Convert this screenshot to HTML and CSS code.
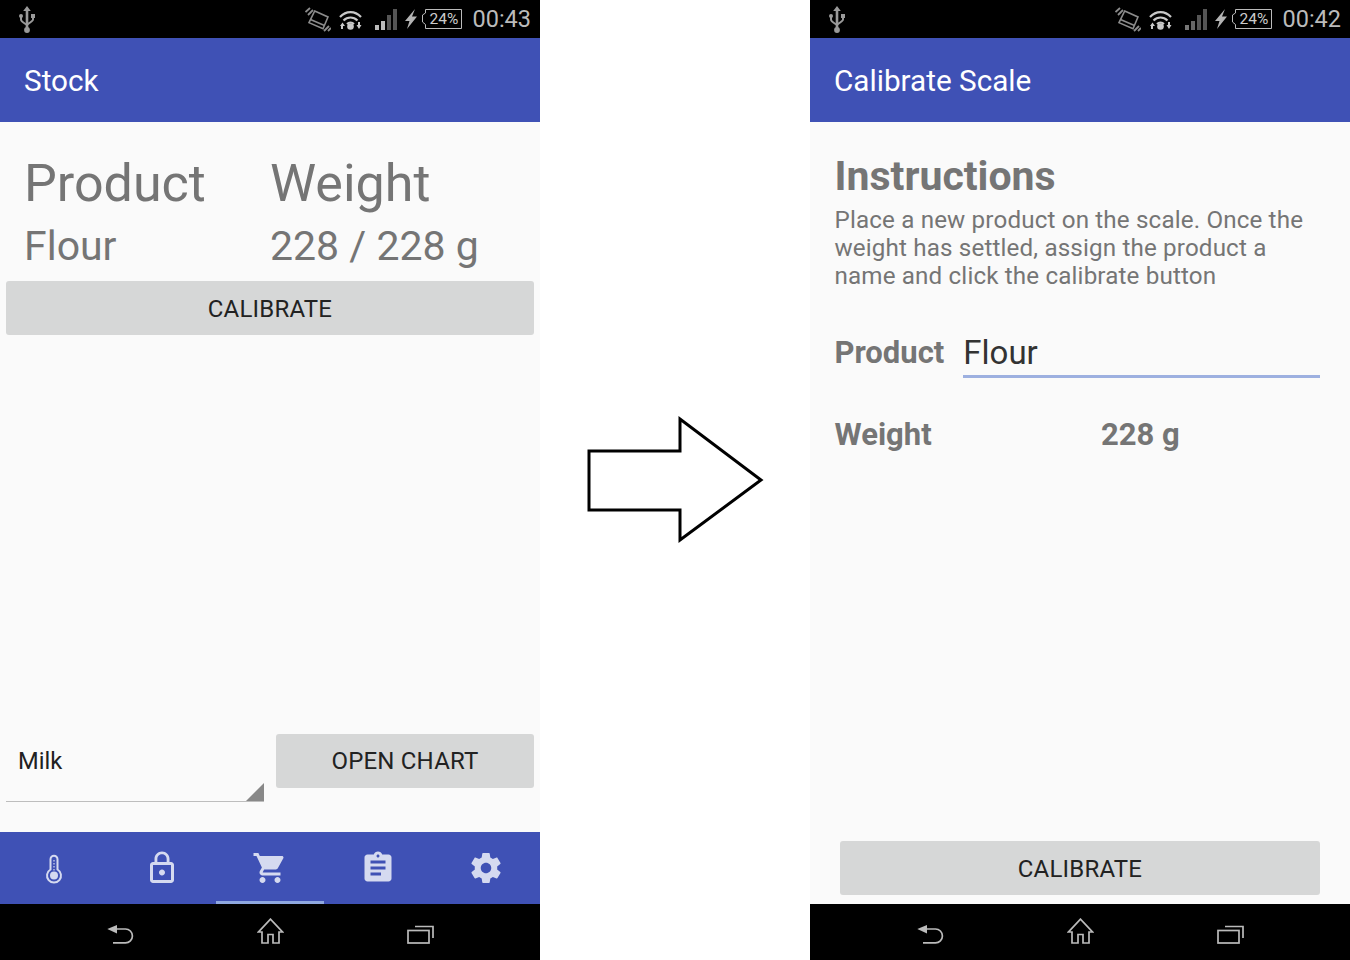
FILE: index.html
```html
<!DOCTYPE html>
<html lang="en">
<head>
  <meta charset="UTF-8">
  <title>Scale screens</title>
  <link rel="stylesheet" href="styles.css">
</head>
<body>
  <svg class="defs" width="0" height="0">
    <defs>
      <g id="usb" fill="#999">
        <path d="M8 0l3.800 5H9.300v19H6.700V5H4.200z"/>
        <circle cx="8" cy="24" r="2.900"/>
        <circle cx="2" cy="10" r="2"/>
        <rect x="12" y="8" width="4" height="4"/>
        <path d="M2 11v2.500c0 2 3 3.500 6 5.500M14 11v2.500c0 1.500-3 3-6 5" fill="none" stroke="#999" stroke-width="2"/>
      </g>
      <g id="vibrate" fill="none" stroke="#8c8c8c" stroke-width="1.600">
        <path d="M9.700 5L23 11 18 22.700 4 16.700z"/>
        <path d="M5.500 13.500l14 6"/>
        <path d="M.5 6L5 2M3 9l5-5M19 25l5-5M23 25l3-3" stroke-width="1.800"/>
      </g>
      <g id="wifi" fill="none" stroke="#c8c8c8" stroke-width="2.200">
        <path d="M1 8c6-6.500 15-6.500 21 0M4.500 11.500c4-4 10-4 14 0M8 15c2-1.800 5-1.800 7 0"/>
        <circle cx="11.500" cy="17.500" r="3.300" fill="#c8c8c8" stroke="none"/>
        <path d="M1 20h2v-3H5L2.500 13.500 0 17h1zM20 13h-2v3h-1.500l2.500 4 2.500-4H20z" transform="translate(1 0)" fill="#c8c8c8" stroke="none"/>
      </g>
      <g id="bolt"><path d="M10 0L0 12h4.500L2 20l10-12.500H7z" fill="#b4b4b4"/></g>
      <g id="battery-box" fill="none" stroke="#bbb" stroke-width="1">
        <path d="M3.500 4V.5H39.500V19.500H3.500V15.500M3.500 4L.5 6V13L3.500 15.500"/>
      </g>
      <g id="tab-thermo" fill="none" stroke="#d5daf0" stroke-width="2">
        <path d="M14.500 9.300a3.500 3.500 0 0 1 7 0v10.200a7 7 0 1 1-7 0z"/>
        <circle cx="18" cy="25.500" r="4" fill="#d5daf0" stroke="none"/>
        <path d="M18 10v11" stroke-width="1.200" stroke-dasharray="1.500 1.500"/>
      </g>
      <g id="tab-lock"><path d="M12 17c1.100 0 2-.9 2-2s-.9-2-2-2-2 .9-2 2 .9 2 2 2zm6-9h-1V6c0-2.760-2.240-5-5-5S7 3.240 7 6v2H6c-1.100 0-2 .9-2 2v10c0 1.100.9 2 2 2h12c1.100 0 2-.9 2-2V10c0-1.100-.9-2-2-2zM8.900 6c0-1.710 1.390-3.100 3.100-3.100s3.100 1.390 3.100 3.100v2H8.900V6zM18 20H6V10h12v10z"/></g>
      <g id="tab-cart"><path d="M7 18c-1.100 0-1.990.9-1.990 2S5.900 22 7 22s2-.9 2-2-.9-2-2-2zM1 2v2h2l3.600 7.590-1.350 2.450c-.16.280-.25.610-.25.960 0 1.100.9 2 2 2h12v-2H7.420c-.14 0-.25-.11-.25-.25l.03-.12.9-1.630h7.450c.750 0 1.410-.41 1.750-1.030l3.580-6.490c.08-.14.120-.31.120-.48 0-.55-.45-1-1-1H5.210l-.94-2H1zm16 16c-1.100 0-1.990.9-1.990 2s.89 2 1.990 2 2-.9 2-2-.9-2-2-2z"/></g>
      <g id="tab-list"><path d="M19 3h-4.180C14.400 1.840 13.300 1 12 1c-1.300 0-2.400.84-2.820 2H5c-1.100 0-2 .9-2 2v14c0 1.100.9 2 2 2h14c1.100 0 2-.9 2-2V5c0-1.100-.9-2-2-2zm-7 0c.55 0 1 .45 1 1s-.45 1-1 1-1-.45-1-1 .45-1 1-1zm2 14H7v-2h7v2zm3-4H7v-2h10v2zm0-4H7V7h10v2z"/></g>
      <g id="tab-gear"><path d="M19.430 12.980c.04-.32.07-.64.07-.98s-.03-.66-.07-.98l2.110-1.650c.19-.15.24-.42.120-.64l-2-3.460c-.12-.22-.39-.3-.61-.22l-2.490 1c-.52-.4-1.080-.73-1.690-.98l-.38-2.650C14.460 2.180 14.250 2 14 2h-4c-.25 0-.46.18-.49.42l-.38 2.650c-.61.25-1.170.59-1.690.98l-2.490-1c-.23-.09-.49 0-.61.22l-2 3.460c-.13.22-.07.49.12.64l2.110 1.650c-.04.32-.07.65-.07.98s.03.66.07.98l-2.110 1.650c-.19.15-.24.42-.12.64l2 3.460c.12.22.39.3.61.22l2.490-1c.52.4 1.080.73 1.690.98l.38 2.650c.03.24.24.42.49.42h4c.25 0 .46-.18.49-.42l.38-2.650c.61-.25 1.170-.59 1.690-.98l2.490 1c.23.09.49 0 .61-.22l2-3.460c.12-.22.07-.49-.12-.64l-2.110-1.650zM12 15.500c-1.930 0-3.500-1.570-3.500-3.500s1.570-3.500 3.500-3.500 3.500 1.570 3.500 3.500-1.570 3.500-3.500 3.500z"/></g>
      <g id="nav-back" fill="none" stroke="#bbb" stroke-width="1.700">
        <path d="M9 5h9.500a6.900 6.900 0 0 1 0 13.800H6"/>
        <path d="M.3 5L10 1v8.500z" fill="#bbb" stroke="none"/>
      </g>
      <g id="nav-home" fill="none" stroke="#bbb" stroke-width="1.700">
        <path d="M13.500 1.200L1.500 14H5V25H11V16.500H16V25H22V14H25.500z"/>
      </g>
      <g id="nav-recent" fill="none" stroke="#bbb" stroke-width="1.700">
        <rect x="2" y="6.500" width="21" height="12.500"/>
        <path d="M9 2.500H27V14"/>
      </g>
    </defs>
  </svg>

  <section class="phone">
    <div class="status">
      <svg class="st-usb" width="16" height="27" viewBox="0 0 16 27"><use href="#usb"/></svg>
      <div class="status-right">
        <svg width="26" height="27" viewBox="0 0 26 27"><use href="#vibrate"/></svg>
        <svg class="st-wifi" width="23" height="21" viewBox="0 0 23 21"><use href="#wifi"/></svg>
        <div class="bars">
          <i class="b1"></i><i class="b2"></i><i class="b3"></i><i class="b4"></i>
        </div>
        <svg class="st-bolt" width="12" height="20" viewBox="0 0 12 20"><use href="#bolt"/></svg>
        <span class="battery">
          <svg class="battery-box" width="40" height="20" viewBox="0 0 40 20"><use href="#battery-box"/></svg>
          24%
        </span>
        <span class="clock">00:43</span>
      </div>
    </div>
    <header class="appbar">Stock</header>
    <main class="content">
      <div class="stock-table">
        <div class="th">Product</div><div class="th">Weight</div>
        <div class="td">Flour</div><div class="td">228 / 228 g</div>
      </div>
      <button class="btn btn-wide">CALIBRATE</button>
      <div class="chart-row">
        <div class="spinner">Milk</div>
        <button class="btn btn-chart">OPEN CHART</button>
      </div>
    </main>
    <nav class="tabs">
      <div class="tab"><svg width="36" height="36" viewBox="0 0 36 36"><use href="#tab-thermo"/></svg></div>
      <div class="tab"><svg width="36" height="36" viewBox="0 0 24 24"><use href="#tab-lock"/></svg></div>
      <div class="tab tab-on"><svg width="36" height="36" viewBox="0 0 24 24"><use href="#tab-cart"/></svg></div>
      <div class="tab"><svg width="36" height="36" viewBox="0 0 24 24"><use href="#tab-list"/></svg></div>
      <div class="tab"><svg width="36" height="36" viewBox="0 0 24 24"><use href="#tab-gear"/></svg></div>
    </nav>
    <footer class="navbar">
      <svg width="27" height="20" viewBox="0 0 27 20"><use href="#nav-back"/></svg>
      <svg width="27" height="26" viewBox="0 0 27 26"><use href="#nav-home"/></svg>
      <svg width="28" height="20" viewBox="0 0 28 20"><use href="#nav-recent"/></svg>
    </footer>
  </section>

  <div class="gutter">
    <svg width="178" height="128" viewBox="0 0 178 128">
      <polygon class="arrow" points="3,35 94,35 94,3 175,64 94,124 94,94 3,94"/>
    </svg>
  </div>

  <section class="phone">
    <div class="status">
      <svg class="st-usb" width="16" height="27" viewBox="0 0 16 27"><use href="#usb"/></svg>
      <div class="status-right">
        <svg width="26" height="27" viewBox="0 0 26 27"><use href="#vibrate"/></svg>
        <svg class="st-wifi" width="23" height="21" viewBox="0 0 23 21"><use href="#wifi"/></svg>
        <div class="bars bars-weak">
          <i class="b1"></i><i class="b2"></i><i class="b3"></i><i class="b4"></i>
        </div>
        <svg class="st-bolt" width="12" height="20" viewBox="0 0 12 20"><use href="#bolt"/></svg>
        <span class="battery">
          <svg class="battery-box" width="40" height="20" viewBox="0 0 40 20"><use href="#battery-box"/></svg>
          24%
        </span>
        <span class="clock">00:42</span>
      </div>
    </div>
    <header class="appbar">Calibrate Scale</header>
    <main class="content content-cal">
      <h2 class="cal-title">Instructions</h2>
      <p class="cal-text">Place a new product on the scale. Once the weight has settled, assign the product a name and click the calibrate button</p>
      <div class="field-row">
        <span class="label">Product</span>
        <span class="input">Flour</span>
      </div>
      <div class="weight-row">
        <span class="label">Weight</span>
        <span class="label">228 g</span>
      </div>
      <button class="btn btn-cal">CALIBRATE</button>
    </main>
    <footer class="navbar">
      <svg width="27" height="20" viewBox="0 0 27 20"><use href="#nav-back"/></svg>
      <svg width="27" height="26" viewBox="0 0 27 26"><use href="#nav-home"/></svg>
      <svg width="28" height="20" viewBox="0 0 28 20"><use href="#nav-recent"/></svg>
    </footer>
  </section>
</body>
</html>
```

FILE: styles.css
```css
body {
  margin: 0;
  display: flex;
  height: 960px;
  overflow: hidden;
  background-color: white;
  font-family: Roboto, sans-serif;
}
.defs {
  position: absolute;
}
.phone {
  width: 540px;
  height: 960px;
  display: flex;
  flex-direction: column;
  background-color: #fafafa;
}
.gutter {
  width: 270px;
  display: flex;
  align-items: center;
  justify-content: center;
}
.arrow {
  fill: white;
  stroke: black;
  stroke-width: 3;
}

/* status bar */
.status {
  height: 38px;
  background-color: black;
  display: flex;
  align-items: center;
  padding: 0 9px 0 19px;
}
.status-right {
  margin-left: auto;
  display: flex;
  align-items: center;
}
.st-wifi {
  margin-left: 8px;
}
.bars {
  display: flex;
  align-items: flex-end;
  gap: 2px;
  height: 21px;
  margin-left: 13px;
}
.bars i {
  display: block;
  width: 4px;
  background-color: #555;
}
.bars .b1 { height: 5px; background-color: #bbb; }
.bars .b2 { height: 9px; background-color: #bbb; }
.bars .b3 { height: 15px; }
.bars .b4 { height: 21px; }
.bars-weak .b1 { background-color: #777; }
.bars-weak .b2 { background-color: #666; }
.st-bolt {
  margin-left: 8px;
}
.battery {
  position: relative;
  margin-left: 5px;
  width: 40px;
  height: 20px;
  padding-left: 3px;
  box-sizing: border-box;
  color: #ccc;
  font-size: 15.500px;
  line-height: 20px;
  text-align: center;
}
.battery-box {
  position: absolute;
  left: 0;
  top: 0;
}
.clock {
  margin-left: 10px;
  color: #bbb;
  font-size: 23.500px;
}

.appbar {
  height: 84px;
  background-color: #3f51b5;
  color: white;
  font-size: 29.700px;
  line-height: 86px;
  padding-left: 24px;
}
.content {
  flex: 1;
  display: flex;
  flex-direction: column;
  padding: 0 6px;
  color: #757575;
}

/* stock screen */
.stock-table {
  display: grid;
  grid-template-columns: 246px 1fr;
  padding: 29px 0 0 18px;
  height: 132px;
  box-sizing: border-box;
}
.th {
  font-size: 52px;
  line-height: 66px;
}
.td {
  font-size: 41px;
  line-height: 58px;
}
.btn {
  display: block;
  border: none;
  border-radius: 3px;
  height: 54px;
  padding: 2px 0 0;
  background-color: #d6d7d7;
  color: #222;
  font-family: Roboto, sans-serif;
  font-size: 24px;
  letter-spacing: 0.2px;
}
.btn-wide {
  width: 528px;
  margin-top: 27px;
}
.chart-row {
  margin-top: auto;
  margin-bottom: 30px;
  display: flex;
  justify-content: space-between;
  align-items: flex-start;
}
.spinner {
  position: relative;
  width: 258px;
  height: 68px;
  box-sizing: border-box;
  border-bottom: 1px solid #bdbdbd;
  padding: 11px 0 0 12px;
  color: #212121;
  font-size: 23.700px;
  line-height: 32px;
}
/* little corner triangle of the spinner */
.spinner::after {
  content: "";
  position: absolute;
  right: 0;
  bottom: 0;
  border-style: solid;
  border-width: 0 0 18px 18px;
  border-color: transparent transparent #888 transparent;
}
.btn-chart {
  width: 258px;
  padding-top: 0;
}

/* bottom tabs */
.tabs {
  height: 72px;
  background-color: #3f51b5;
  display: flex;
}
.tab {
  flex: 1;
  display: flex;
  align-items: center;
  justify-content: center;
  box-sizing: border-box;
  padding-top: 2px;
  border-bottom: 3px solid transparent;
  fill: #d5daf0;
}
.tab-on {
  border-bottom-color: #8fa8e0;
}
.navbar {
  height: 56px;
  box-sizing: border-box;
  background-color: black;
  display: grid;
  grid-template-columns: 1fr 1fr 1fr;
  justify-items: center;
  align-items: end;
  padding: 0 45px 16px;
}

/* calibrate screen */
.content-cal {
  padding: 0 30px 9px 24.500px;
}
.cal-title {
  margin: 28px 0 0;
  font-size: 41px;
  line-height: 52px;
  font-weight: bold;
}
.cal-text {
  margin: 4px 0 0;
  font-size: 24.200px;
  letter-spacing: 0.15px;
  line-height: 28px;
}
.field-row {
  display: flex;
  align-items: center;
  gap: 19px;
  margin-top: 28px;
  height: 60px;
}
.field-row .label {
  padding-top: 8px;
}
.label {
  font-size: 31px;
  font-weight: bold;
}
.input {
  flex: 1;
  height: 60px;
  box-sizing: border-box;
  border-bottom: 3px solid #9db0e0;
  color: #333;
  font-size: 33px;
  line-height: 69px;
}
.weight-row {
  display: grid;
  grid-template-columns: 266.500px 1fr;
  margin-top: 38px;
}
.btn-cal {
  width: 480px;
  margin: auto 0 0 5.500px;
}
```
